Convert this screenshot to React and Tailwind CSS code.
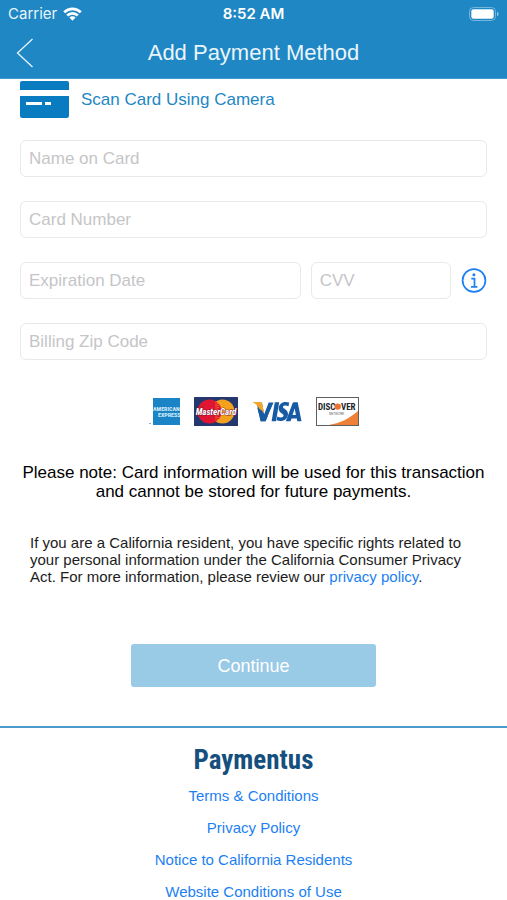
import React, { useState } from 'react';

const FOOTER_LINKS = [
    'Terms & Conditions',
    'Privacy Policy',
    'Notice to California Residents',
    'Website Conditions of Use',
];

function StatusBar() {
    return (
        <div className="grid h-7 grid-cols-3 items-center px-2 text-[15px] text-white">
            <div className="flex items-center gap-[6px] font-['Inter'] text-[#eaf5fb]">
                Carrier
                <svg width="19" height="14" viewBox="0 0 19 14" fill="none" stroke="#fff" strokeWidth="2.7">
                    <path d="M1.2 5.2a11.8 11.8 0 0 1 16.6 0" />
                    <path d="M4.2 8.5a7.5 7.5 0 0 1 10.6 0" />
                    <path d="M9.5 13.8 6.4 10.6a4.4 4.4 0 0 1 6.2 0Z" fill="#fff" stroke="none" />
                </svg>
            </div>
            <div className="text-center font-['Inter'] font-semibold">8:52 AM</div>
            <div className="flex justify-end">
                <svg width="30" height="14" viewBox="0 0 30 14">
                    <rect x="0.5" y="0.5" width="26" height="13" rx="4" fill="none" stroke="#76b6dc" />
                    <rect x="2.3" y="2.3" width="22.4" height="9.4" rx="2.2" fill="#fff" />
                    <path d="M28 4.8c2.2.8 2.2 3.6 0 4.4Z" fill="#8ec5e6" />
                </svg>
            </div>
        </div>
    );
}

function Field({ label, className = '' }) {
    const [value, setValue] = useState('');
    return (
        <input
            type="text"
            aria-label={label}
            placeholder={label}
            value={value}
            onChange={(e) => setValue(e.target.value)}
            className={`h-[37px] w-full min-w-0 rounded-md border border-[#e9e9e9] bg-white px-2 text-[17px] text-black outline-none placeholder:text-[#c5c5c7] ${className}`}
        />
    );
}

// Accepted card brands
function CardLogos() {
    return (
        <div className="flex items-center justify-center gap-[14px]">
            <svg width="31" height="29" viewBox="0 0 31 29" role="img" aria-label="American Express">
                <rect x="4" y="1" width="27" height="27" fill="#1b84c6" />
                <g fill="#d8edf8" fontFamily="Roboto Condensed, Roboto" fontWeight="bold" fontSize="6">
                    <text x="4" y="14">AMERICAN</text>
                    <text x="9" y="20">EXPRESS</text>
                </g>
                <path d="M0 26.5h2" stroke="#7db7dc" />
            </svg>
            <svg width="44" height="29" viewBox="0 0 44 29" role="img" aria-label="MasterCard">
                <rect width="44" height="29" rx="0.5" fill="#22386f" />
                <circle cx="28.5" cy="14.5" r="12" fill="#f3a11f" />
                <circle cx="15.5" cy="14.5" r="12" fill="#df1532" />
                <path d="M22 4.6v19.8M24 6v17" stroke="#f3a11f" strokeDasharray="1 1" />
                <text x="22" y="17.8" textAnchor="middle" fontSize="9" fontWeight="bold" fontStyle="italic" fontFamily="Roboto Condensed, Roboto" fill="#fff" stroke="#7d1935" strokeWidth="0.8" paintOrder="stroke">MasterCard</text>
            </svg>
            <svg width="50" height="29" viewBox="0 0 50 29" role="img" aria-label="Visa">
                <path d="m4.5 5.5 4.2 18.7h4.8L21.5 5.4h-4.8l-4.6 12.1L9.8 5.4Z" fill="#165ba3" />
                <path d="M1 5h7.2c1.3 0 1.9.6 2.1 1.7l1.8 9.6-4.3-3.5C6.2 9.3 4 6.6 1 5.6Z" fill="#f2a72a" />
                <path d="m5.3 11 3.4 13.2h4.8l2.2-5-3.6-1.7-2.4-4.2Z" fill="#165ba3" />
                <path d="M22.8 5.2h4.4l-3.2 19h-4.4ZM37.2 5.6l-.7 3.7c-2.9-1.3-5.5-.8-5.5.7 0 1.9 5 2.5 5 7.1 0 5.7-6 8.5-11.4 6.2l.7-3.9c2.9 1.6 6.3 1.3 6.3-.8 0-2.2-4.9-2.5-4.9-7.1 0-5.3 5.2-7.9 10.5-5.9Z" fill="#165ba3" />
                <path fillRule="evenodd" d="M42 5.2h3.7l3.8 19h-4.2l-.5-2.8h-5.2l-1.1 2.8h-4.7l6.6-17.5c.3-1 .8-1.5 1.6-1.5Zm.7 6.2-2.2 6.5h3.4Z" fill="#165ba3" />
            </svg>
            <svg width="43" height="29" viewBox="0 0 43 29" role="img" aria-label="Discover Network">
                <rect x="0.5" y="0.5" width="42" height="28" fill="#fff" stroke="#5d6063" />
                <path d="M42 14v14H13C25 26 34 21 42 14Z" fill="#ee8135" />
                <g fontFamily="Roboto Condensed, Roboto" fontWeight="bold" fontSize="9" fill="#20262b">
                    <text x="2" y="12.8">DISC</text>
                    <text x="25" y="12.8">VER</text>
                </g>
                <circle cx="21.7" cy="9.6" r="3.2" fill="#ec7432" />
                <text x="13" y="18" fontFamily="Liberation Sans" fontSize="3" fill="#555">NETWORK</text>
            </svg>
        </div>
    );
}

export default function App() {
    return (
        <div className="min-h-screen bg-white font-['Liberation_Sans',Arial,sans-serif] text-black">
            <header className="border-b border-[#3b9ad0] bg-[#1e87c4]">
                <StatusBar />
                <div className="grid h-[50px] grid-cols-[40px_1fr_40px] items-center px-3 text-[#eaf5fb]">
                    <button type="button" aria-label="Back" className="pl-1">
                        <svg width="18" height="30" viewBox="0 0 18 30" fill="none" stroke="currentColor" strokeWidth="1.3">
                            <path d="M16.5 1 1.5 15l15 14" />
                        </svg>
                    </button>
                    <h1 className="text-center text-[22px] leading-6">Add Payment Method</h1>
                </div>
            </header>

            <main>
                <form className="px-5 pt-[2px]" onSubmit={(e) => e.preventDefault()}>
                    <button type="button" className="flex items-center gap-3 text-[17px] text-[#1e87c4]">
                        <svg width="49" height="37" viewBox="0 0 49 37" fill="#087bc1">
                            <path d="M2 0h45a2 2 0 0 1 2 2v7H0V2a2 2 0 0 1 2-2Z" />
                            <path fillRule="evenodd" d="M0 15h49v19.5a2.5 2.5 0 0 1-2.5 2.5h-44A2.5 2.5 0 0 1 0 34.5Zm6 6v3h16v-3Zm19 0v3h6v-3Z" />
                        </svg>
                        Scan Card Using Camera
                    </button>

                    <div className="mt-[22px] flex flex-col gap-6">
                        <Field label="Name on Card" />
                        <Field label="Card Number" />
                        <div className="flex items-center gap-[10px]">
                            <div className="grid flex-1 grid-cols-[2fr_1fr] gap-[10px]">
                                <Field label="Expiration Date" />
                                <Field label="CVV" />
                            </div>
                            <button type="button" aria-label="What is a CVV?" className="text-[#1c7ff2]">
                                <svg width="26" height="26" viewBox="0 0 26 26" fill="none" stroke="currentColor">
                                    <circle cx="13" cy="12.5" r="11.4" strokeWidth="1.7" />
                                    <circle cx="12.9" cy="6.8" r="1.5" fill="currentColor" stroke="none" />
                                    <path d="M10.3 10.7h3.2v8M10 18.8h6.4" strokeWidth="1.7" />
                                </svg>
                            </button>
                        </div>
                        <Field label="Billing Zip Code" />
                    </div>

                    <div className="mt-[37px]">
                        <CardLogos />
                    </div>

                    <p className="-mx-1 mt-[37px] text-center text-[17px] leading-[19px]">
                        Please note: Card information will be used for this transaction and cannot be stored for future payments.
                    </p>

                    <p className="mt-[33px] px-[10px] text-[15px] leading-[17px] text-[#1c1c1c]">
                        If you are a California resident, you have specific rights related to your personal information under the
                        California Consumer Privacy Act. For more information, please review our{' '}
                        <a href="#privacy" className="text-[#1c7ff2]">privacy policy</a>.
                    </p>

                    <button type="submit" className="mx-auto mt-[59px] block h-[43px] w-[245px] rounded-[3px] bg-[#99cae6] text-lg text-white">
                        Continue
                    </button>
                </form>
            </main>

            <footer className="mt-[39px] border-t-2 border-[#4a9bcb] pt-4 text-center">
                <div className="font-['Roboto_Condensed','Roboto',sans-serif] text-[27px] leading-8 font-bold text-[#154f7d]">
                    Paymentus
                </div>
                <nav className="mt-[10px] flex flex-col items-center gap-3 text-[15px] leading-5 text-[#1c7ff2]">
                    {FOOTER_LINKS.map((label) => (
                        <a key={label} href="#legal">{label}</a>
                    ))}
                </nav>
            </footer>
        </div>
    );
}
